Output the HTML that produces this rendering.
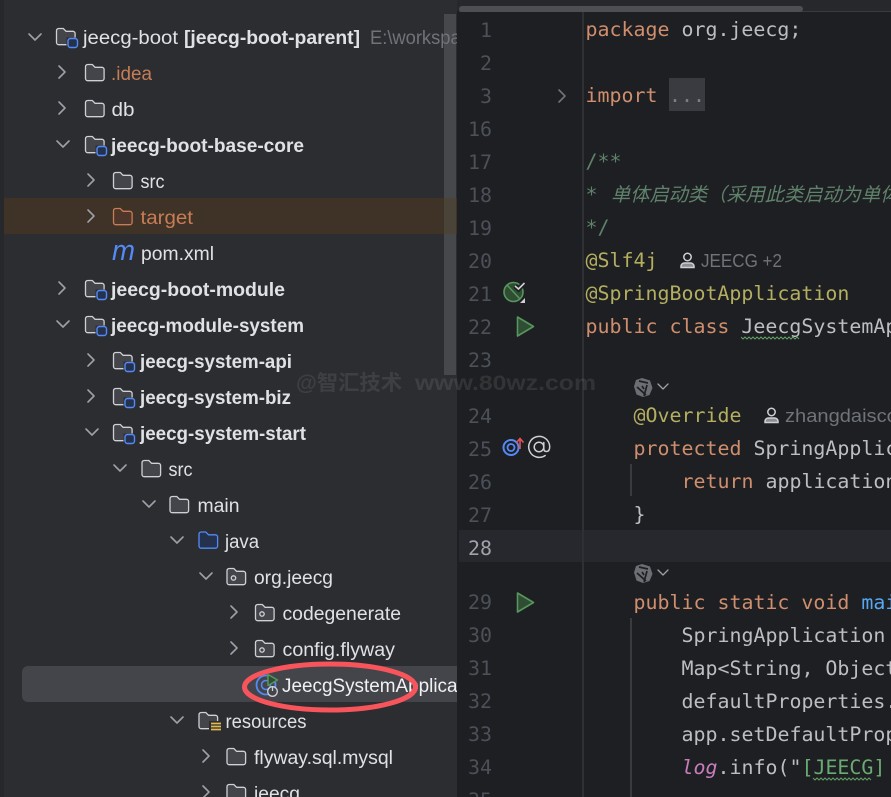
<!DOCTYPE html>
<html lang="en"><head><meta charset="utf-8"><title>IDE</title>
<style>
html,body{margin:0;padding:0;background:#1e1f22;width:891px;height:797px;overflow:hidden}
svg{display:block}
.t{font:19px "Liberation Sans","Noto Sans CJK SC",sans-serif;fill:#dfe1e5}
.b{font-weight:700}
.o{fill:#c77d55}
.c{font:19.93px "DejaVu Sans Mono","Liberation Mono",monospace;fill:#bcbec4}
.k{fill:#cf8e6d}.a{fill:#b3ae60}.g{fill:#5f826b}.m{fill:#56a8f5}.s{fill:#6aab73}.p{fill:#c77dbb;font-style:italic}
.n{font:19.93px "DejaVu Sans Mono","Liberation Mono",monospace;fill:#4b5059;text-anchor:end}
.i{font:18.5px "Liberation Sans",sans-serif;fill:#6f737a}
.ch{fill:none;stroke:#9da0a8;stroke-width:1.6;stroke-linecap:round;stroke-linejoin:round}
</style></head><body>
<svg width="891" height="797" viewBox="0 0 891 797" xmlns="http://www.w3.org/2000/svg">
<defs>
<clipPath id="side"><rect x="0" y="0" width="457" height="797"/></clipPath>
<clipPath id="ed"><rect x="459" y="0" width="432" height="797"/></clipPath>
<g id="f"><path d="M1 3.2a2.2 2.2 0 0 1 2.2-2.2h4.6l2.8 2.8h6.8a2.2 2.2 0 0 1 2.2 2.2v9a2.2 2.2 0 0 1-2.2 2.2H3.200a2.2 2.2 0 0 1-2.200-2.200z" fill="#43454a" stroke="#ced0d6" stroke-width="1.3"/></g>
<g id="mf"><use href="#f"/><rect x="11" y="10" width="12" height="11" fill="#2b2d30"/><rect x="12.500" y="11" width="9.500" height="9" rx="2.500" fill="#25324d" stroke="#548af7" stroke-width="1.400"/></g>
<g id="pf"><use href="#f"/><circle cx="7.500" cy="10.500" r="2.200" fill="none" stroke="#ced0d6" stroke-width="1.300"/></g>
<path id="cr" class="ch" d="M-3-6L3 0L-3 6"/>
<path id="cd" class="ch" d="M-6-3L0 3L6-3"/>
<g id="ai"><path d="M8 0l8 2.500l2.500 7.500l-3 7l-6.500 2l-6.500-2.500l-2.500-8l2-6.500z" fill="#6b6e74"/><path d="M5 3l9 2M13 7l-3 11M3 9l9 8M8 8l2 3" stroke="#1e1f22" stroke-width="1.700" fill="none"/></g>
<g id="ur" fill="none" stroke="#ced0d6" stroke-width="1.500"><circle cx="7.500" cy="-3" r="3.700"/><path d="M1 7.500v-1.500a3.500 3.500 0 0 1 3.500-3h6a3.500 3.500 0 0 1 3.500 3v1.500z" fill="#8b8e94"/></g>
</defs>

<rect width="891" height="797" fill="#1e1f22"/>
<!-- sidebar -->
<rect x="0" y="0" width="457" height="797" fill="#2b2d30"/>
<rect x="0" y="0" width="4" height="797" fill="#27282b"/>
<rect x="4" y="198" width="453" height="36" fill="#3f3226"/>
<rect x="22" y="666" width="445" height="36" rx="6" fill="#43454a"/>
<rect x="444" y="14" width="12" height="361" fill="#46484c"/>
<rect x="444" y="198" width="12" height="36" fill="#4a4438"/>

<g clip-path="url(#side)">
<use href="#cd" x="35" y="37"/>
<use href="#cr" x="62" y="72"/><use href="#cr" x="62" y="108"/>
<use href="#cd" x="63" y="144"/>
<use href="#cr" x="91" y="180"/><use href="#cr" x="91" y="216"/>
<use href="#cr" x="62" y="288"/>
<use href="#cd" x="63" y="324"/>
<use href="#cr" x="91" y="360"/><use href="#cr" x="91" y="396"/>
<use href="#cd" x="92" y="432"/>
<use href="#cd" x="120" y="468"/>
<use href="#cd" x="149" y="504"/>
<use href="#cd" x="177" y="540"/>
<use href="#cd" x="206" y="576"/>
<use href="#cr" x="234" y="612"/><use href="#cr" x="234" y="648"/>
<use href="#cd" x="177" y="720"/>
<use href="#cr" x="206" y="756"/><use href="#cr" x="206" y="792"/>

<use href="#mf" x="55.500" y="27.500"/>
<use href="#f" x="84.500" y="63.500"/>
<use href="#f" x="84.500" y="99.500"/>
<use href="#mf" x="84.500" y="135.500"/>
<use href="#f" x="112.500" y="171.500"/>
<path d="M113.500 210.700a2.200 2.200 0 0 1 2.200-2.200h4.600l2.800 2.800h6.800a2.200 2.200 0 0 1 2.200 2.200v9a2.200 2.200 0 0 1-2.200 2.200h-14.200a2.200 2.200 0 0 1-2.200-2.200z" fill="#4e362b" stroke="#c77d55" stroke-width="1.300"/>
<text x="112" y="260" font-family="Liberation Sans,sans-serif" font-style="italic" font-size="29" fill="#548af7" textLength="23" lengthAdjust="spacingAndGlyphs">m</text>
<use href="#mf" x="84.500" y="279.500"/>
<use href="#mf" x="84.500" y="315.500"/>
<use href="#mf" x="112.500" y="351.500"/>
<use href="#mf" x="112.500" y="387.500"/>
<use href="#mf" x="112.500" y="423.500"/>
<use href="#f" x="141" y="459.500"/>
<use href="#f" x="169" y="495.500"/>
<path d="M199 534.200a2.200 2.200 0 0 1 2.200-2.200h4.600l2.800 2.800h6.800a2.200 2.200 0 0 1 2.200 2.200v9a2.200 2.200 0 0 1-2.200 2.200h-14.200a2.200 2.200 0 0 1-2.200-2.200z" fill="#25324d" stroke="#548af7" stroke-width="1.300"/>
<use href="#pf" x="226" y="567.500"/>
<use href="#pf" x="254.500" y="603.500"/>
<use href="#pf" x="254.500" y="639.500"/>
<use href="#f" x="198" y="711.500"/>
<rect x="209" y="721" width="13" height="11" fill="#2b2d30"/>
<path d="M211 723.500h10M211 726.500h10M211 729.500h10" stroke="#e0b84f" stroke-width="1.700"/>
<use href="#f" x="226" y="747.500"/>
<use href="#f" x="226" y="783.500"/>

<g lengthAdjust="spacingAndGlyphs">
<text class="t" lengthAdjust="spacingAndGlyphs" x="83" y="44" textLength="95">jeecg-boot</text>
<text class="t b" lengthAdjust="spacingAndGlyphs" x="184" y="44" textLength="176">[jeecg-boot-parent]</text>
<text class="t" lengthAdjust="spacingAndGlyphs" x="370" y="44" style="fill:#6f737a" textLength="110">E:\workspace</text>
<text class="t o" lengthAdjust="spacingAndGlyphs" x="111" y="80" textLength="41">.idea</text>
<text class="t" lengthAdjust="spacingAndGlyphs" x="111.500" y="116" textLength="23">db</text>
<text class="t b" lengthAdjust="spacingAndGlyphs" x="111" y="152" textLength="193">jeecg-boot-base-core</text>
<text class="t" lengthAdjust="spacingAndGlyphs" x="140.500" y="188" textLength="24">src</text>
<text class="t o" lengthAdjust="spacingAndGlyphs" x="140.500" y="224" textLength="52.500">target</text>
<text class="t" lengthAdjust="spacingAndGlyphs" x="141" y="260" textLength="73">pom.xml</text>
<text class="t b" lengthAdjust="spacingAndGlyphs" x="111" y="296" textLength="174">jeecg-boot-module</text>
<text class="t b" lengthAdjust="spacingAndGlyphs" x="111" y="332" textLength="193">jeecg-module-system</text>
<text class="t b" lengthAdjust="spacingAndGlyphs" x="140" y="368" textLength="152">jeecg-system-api</text>
<text class="t b" lengthAdjust="spacingAndGlyphs" x="140" y="404" textLength="151">jeecg-system-biz</text>
<text class="t b" lengthAdjust="spacingAndGlyphs" x="140" y="440" textLength="166">jeecg-system-start</text>
<text class="t" lengthAdjust="spacingAndGlyphs" x="168.500" y="476" textLength="24">src</text>
<text class="t" lengthAdjust="spacingAndGlyphs" x="197.500" y="512" textLength="42">main</text>
<text class="t" lengthAdjust="spacingAndGlyphs" x="225" y="548" textLength="34">java</text>
<text class="t" lengthAdjust="spacingAndGlyphs" x="254" y="584" textLength="79">org.jeecg</text>
<text class="t" lengthAdjust="spacingAndGlyphs" x="282.500" y="620" textLength="118.500">codegenerate</text>
<text class="t" lengthAdjust="spacingAndGlyphs" x="282.500" y="656" textLength="112.500">config.flyway</text>
<text class="t" lengthAdjust="spacingAndGlyphs" x="282" y="692" textLength="206" style="fill:#f0f1f3">JeecgSystemApplication</text>
<text class="t" lengthAdjust="spacingAndGlyphs" x="225.500" y="728" textLength="81">resources</text>
<text class="t" lengthAdjust="spacingAndGlyphs" x="254" y="764" textLength="139">flyway.sql.mysql</text>
<text class="t" lengthAdjust="spacingAndGlyphs" x="254" y="800" textLength="46">jeecg</text>
</g>

<circle cx="266" cy="685" r="9.500" fill="none" stroke="#548af7" stroke-width="1.800"/>
<circle cx="266" cy="685" r="4.500" fill="none" stroke="#548af7" stroke-width="1.500"/>
<path d="M268 674.500l9.500 5.500l-9.500 5.500z" fill="#2e4d33" stroke="#57965c" stroke-width="1.500" stroke-linejoin="round"/>
<circle cx="272.500" cy="691.500" r="4.800" fill="#43454a" stroke="#ced0d6" stroke-width="1.300"/>
<path d="M272.500 686v5" stroke="#ced0d6" stroke-width="1.300"/>
</g>
<ellipse cx="330" cy="687" rx="85.500" ry="23" fill="none" stroke="#f7555b" stroke-width="5"/>

<!-- editor -->
<rect x="457" y="0" width="434" height="797" fill="#1e1f22"/>
<rect x="457" y="0" width="434" height="11" fill="#26282b"/>
<rect x="459" y="11" width="432" height="1" fill="#393b40"/>
<rect x="459" y="6" width="344" height="6" rx="3" fill="#4d4f53"/>
<rect x="459" y="530" width="432" height="32" fill="#26282e"/>
<rect x="582" y="12" width="2" height="785" fill="#2e3034"/>
<rect x="669" y="78" width="36" height="33" fill="#393b40"/>
<rect x="630" y="464" width="2" height="32" fill="#393b40"/>
<rect x="630" y="618" width="2" height="179" fill="#393b40"/>

<g clip-path="url(#ed)">
<text class="n" x="492" y="37">1</text>
<text class="n" x="492" y="70">2</text>
<text class="n" x="492" y="103">3</text>
<text class="n" x="492" y="136">16</text>
<text class="n" x="492" y="169">17</text>
<text class="n" x="492" y="202">18</text>
<text class="n" x="492" y="235">19</text>
<text class="n" x="492" y="268">20</text>
<text class="n" x="492" y="301">21</text>
<text class="n" x="492" y="334">22</text>
<text class="n" x="492" y="367">23</text>
<text class="n" x="492" y="423">24</text>
<text class="n" x="492" y="456">25</text>
<text class="n" x="492" y="489">26</text>
<text class="n" x="492" y="522">27</text>
<text class="n" x="492" y="555" style="fill:#a1a3ab">28</text>
<text class="n" x="492" y="609">29</text>
<text class="n" x="492" y="642">30</text>
<text class="n" x="492" y="675">31</text>
<text class="n" x="492" y="708">32</text>
<text class="n" x="492" y="741">33</text>
<text class="n" x="492" y="774">34</text>
<text class="n" x="492" y="807">35</text>

<path class="ch" d="M559 90l6 6l-6 6" style="stroke:#6f737a"/>

<text class="c" x="585.500" y="36"><tspan class="k">package</tspan> org.jeecg;</text>
<text class="c" x="585.500" y="102"><tspan class="k">import</tspan></text>
<text class="c" x="669" y="102" style="fill:#7a7e85">...</text>
<text class="c g" x="585.500" y="168" font-style="italic">/**</text>
<text class="c g" x="585.500" y="201" font-style="italic">*</text>
<text x="611" y="201" font-family="'Noto Sans CJK SC',sans-serif" font-size="19" font-style="italic" fill="#5f826b" textLength="346" lengthAdjust="spacingAndGlyphs">单体启动类（采用此类启动为单体应用）</text>
<text class="c g" x="585.500" y="234" font-style="italic">*/</text>
<text class="c a" x="585.500" y="267">@Slf4j</text>
<use href="#ur" x="680" y="260"/>
<text class="i" x="701" y="267" textLength="81" lengthAdjust="spacingAndGlyphs">JEECG +2</text>
<text class="c a" x="585.500" y="300">@SpringBootApplication</text>
<text class="c" x="585.500" y="333"><tspan class="k">public class</tspan> JeecgSystemApplication</text>
<path d="M741 337l2 2l2-2l2 2l2-2l2 2l2-2l2 2l2-2l2 2l2-2l2 2l2-2l2 2l2-2l2 2l2-2l2 2l2-2l2 2l2-2l2 2l2-2l2 2l2-2l2 2l2-2l2 2l2-2l2 2" fill="none" stroke="#5f9e66" stroke-width="1"/>
<use href="#ai" x="634" y="378"/>
<path class="ch" d="M658 384l5 5l5-5" style="stroke-width:1.300"/>
<text class="c a" x="633.500" y="422">@Override</text>
<use href="#ur" x="764" y="415"/>
<text class="i" x="785" y="422" textLength="124" lengthAdjust="spacingAndGlyphs">zhangdaiscott</text>
<text class="c" x="633.500" y="455"><tspan class="k">protected</tspan> SpringApplicationBuilder</text>
<text class="c" x="681.500" y="488"><tspan class="k">return</tspan> application.sources</text>
<text class="c" x="633.500" y="521">}</text>
<use href="#ai" x="634" y="564"/>
<path class="ch" d="M658 570l5 5l5-5" style="stroke-width:1.300"/>
<text class="c" x="633.500" y="609"><tspan class="k">public static void</tspan> <tspan class="m">main</tspan>(String[] args)</text>
<text class="c" x="681.500" y="642">SpringApplication app</text>
<text class="c" x="681.500" y="675">Map&lt;String, Object&gt; defaultProperties</text>
<text class="c" x="681.500" y="708">defaultProperties.put</text>
<text class="c" x="681.500" y="741">app.setDefaultProperties</text>
<text class="c" x="681.500" y="774"><tspan class="p">log</tspan>.info(<tspan>"</tspan><tspan class="s">[JEECG]</tspan></text>
<path d="M813 778l2 2l2-2l2 2l2-2l2 2l2-2l2 2l2-2l2 2l2-2l2 2l2-2l2 2l2-2l2 2l2-2l2 2l2-2l2 2l2-2l2 2l2-2l2 2l2-2l2 2l2-2l2 2l2-2l2 2" fill="none" stroke="#5f9e66" stroke-width="1"/>

<circle cx="513.500" cy="292" r="9.500" fill="#2e4d33" stroke="#57965c" stroke-width="1.600"/>
<path d="M507 285l13 14" stroke="#57965c" stroke-width="1.500"/>
<path d="M515 286l3.500 3l6-6" fill="none" stroke="#1e1f22" stroke-width="5"/>
<path d="M515 286l3.500 3l6-6" fill="none" stroke="#ced0d6" stroke-width="1.600"/>
<path d="M525 298v5h-5z" fill="#ced0d6"/>
<path d="M517.500 317l16 9.500l-16 9.500z" fill="#2e4d33" stroke="#57965c" stroke-width="1.600" stroke-linejoin="round"/>
<path d="M517.500 593l16 9.500l-16 9.500z" fill="#2e4d33" stroke="#57965c" stroke-width="1.600" stroke-linejoin="round"/>
<circle cx="511" cy="447.500" r="7.500" fill="none" stroke="#548af7" stroke-width="2"/>
<circle cx="511" cy="447.500" r="3.500" fill="none" stroke="#548af7" stroke-width="1.800"/>
<path d="M520 449v-10M516.500 442.500l3.500-4l3.500 4" fill="none" stroke="#e35252" stroke-width="1.600"/>
<circle cx="539" cy="447" r="4.800" fill="none" stroke="#ced0d6" stroke-width="1.500"/>
<path d="M543.800 442.500v6q0 3 2.700 3q3.200 0 3.200-5a10.500 10.500 0 1 0-4.500 9" fill="none" stroke="#ced0d6" stroke-width="1.500" stroke-linecap="round"/>
</g>

<g font-family="'Liberation Sans','Noto Sans CJK SC',sans-serif" font-weight="700" font-size="21" fill="#ffffff" fill-opacity="0.09">
<text x="296" y="390" textLength="106" lengthAdjust="spacingAndGlyphs">@智汇技术</text>
<text x="415" y="390" textLength="181" lengthAdjust="spacingAndGlyphs">www.80wz.com</text>
</g>
</svg>
</body></html>
